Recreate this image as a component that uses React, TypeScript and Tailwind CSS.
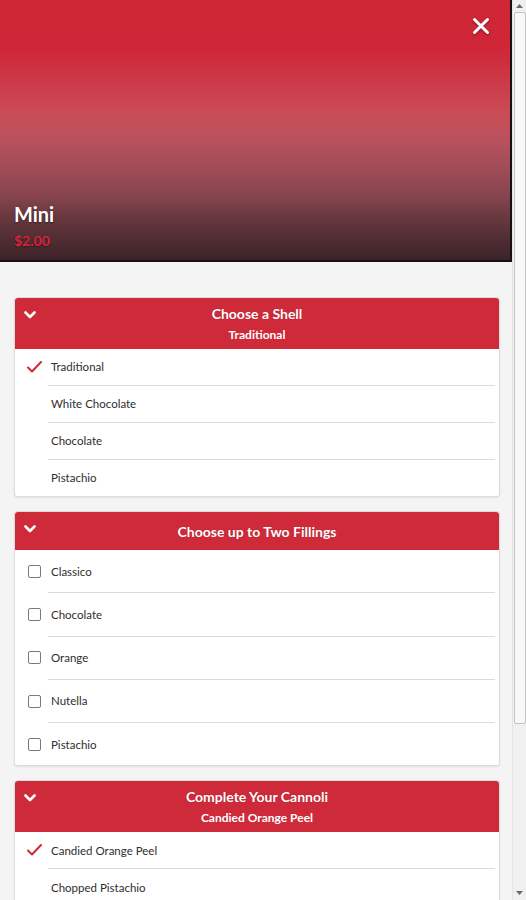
import React from 'react';

interface Section {
  title: string;
  subtitle?: string;
  kind: 'radio' | 'check';
  rowHeight: string;
  options: { label: string; selected?: boolean }[];
}

const sections: Section[] = [
  {
    title: 'Choose a Shell',
    subtitle: 'Traditional',
    kind: 'radio',
    rowHeight: 'h-[36px]',
    options: [
      { label: 'Traditional', selected: true },
      { label: 'White Chocolate' },
      { label: 'Chocolate' },
      { label: 'Pistachio' },
    ],
  },
  {
    title: 'Choose up to Two Fillings',
    kind: 'check',
    rowHeight: 'h-[42.3px]',
    options: [
      { label: 'Classico' },
      { label: 'Chocolate' },
      { label: 'Orange' },
      { label: 'Nutella' },
      { label: 'Pistachio' },
    ],
  },
  {
    title: 'Complete Your Cannoli',
    subtitle: 'Candied Orange Peel',
    kind: 'radio',
    rowHeight: 'h-[36px]',
    options: [
      { label: 'Candied Orange Peel', selected: true },
      { label: 'Chopped Pistachio' },
    ],
  },
];

function Chevron() {
  return (
    <svg width="12" height="8" viewBox="0 0 12 8" fill="none">
      <path d="M1.5 1.5 L6 6 L10.5 1.5" stroke="white" strokeWidth="2.6" strokeLinecap="round" strokeLinejoin="round" />
    </svg>
  );
}

function Check() {
  return (
    <svg width="15" height="12" viewBox="0 0 15 12" fill="none">
      <path d="M1 6.5 L5 10.5 L14 1" stroke="#cf2a39" strokeWidth="2" strokeLinecap="round" strokeLinejoin="round" />
    </svg>
  );
}

function OptionCard({ section }: { section: Section }) {
  return (
    <div className="shrink-0 bg-white border border-[#dcdcdc] rounded-[3px] shadow-[0_1px_2px_rgba(0,0,0,0.08)]">
      <div className={`relative bg-[#cf2a39] rounded-t-[3px] flex flex-col items-center justify-center text-white font-bold ${section.subtitle ? 'h-[51px]' : 'h-[38px]'}`}>
        <div className="absolute left-[9px] top-[13px]">
          <Chevron />
        </div>
        <div className="text-[14px] leading-[19px] [text-shadow:0_0_1px_rgba(0,0,0,0.25)]">{section.title}</div>
        {section.subtitle && (
          <div className="text-[12px] leading-[16px] mt-[4px]">{section.subtitle}</div>
        )}
      </div>
      <div>
        {section.options.map((opt, i) => (
          <div key={opt.label + i}>
            {i > 0 && <div className="ml-[33px] mr-[4px] border-t border-[#dadada]" />}
            <div className={`flex items-center ${section.rowHeight}`}>
              <div className="w-[36px] flex justify-center pl-[2px]">
                {section.kind === 'check' ? (
                  <div className="w-[13px] h-[13px] border-[1.5px] border-[#7a7a7a] rounded-[2px] bg-white" />
                ) : opt.selected ? (
                  <Check />
                ) : null}
              </div>
              <span className="text-[11.5px] text-[#2e2e2e]">{opt.label}</span>
            </div>
          </div>
        ))}
      </div>
    </div>
  );
}

function Scrollbar() {
  return (
    <div className="w-[14px] h-full bg-[#f0f0f0] border-l border-[#e4e4e4] flex flex-col items-center">
      <div className="h-[12px] flex items-center justify-center">
        <svg width="7" height="4" viewBox="0 0 7 4"><path d="M0 4 L3.5 0 L7 4 Z" fill="#6b6b6b" /></svg>
      </div>
      <div className="w-[12px] h-[712px] bg-[#f8f8f8] border border-[#c4c4c4] rounded-[2px]" />
      <div className="flex-1" />
      <div className="h-[14px] flex items-center justify-center">
        <svg width="7" height="4" viewBox="0 0 7 4"><path d="M0 0 L3.5 4 L7 0 Z" fill="#6b6b6b" /></svg>
      </div>
    </div>
  );
}

export default function App() {
  return (
    <div className="h-[900px] w-[526px] overflow-hidden flex bg-[#f4f4f4] font-['Lato','Liberation_Sans',sans-serif]">
      <div className="w-[512px] flex flex-col">
        <div className="relative shrink-0 h-[262px] border-b-2 border-r-2 border-[#151012] bg-[linear-gradient(to_bottom,#cf2636_0%,#cf2737_19%,#cd3545_29%,#cb4a55_42%,#b8525e_54%,#a24c57_64%,#8a4650_74%,#6b3940_83%,#502d33_92%,#3c2328_100%)] flex flex-col justify-end pl-[14px] pb-[10px]">
          <button className="absolute right-[20px] top-[17px] [filter:drop-shadow(0_1px_1px_rgba(0,0,0,0.4))]">
            <svg width="18" height="18" viewBox="0 0 18 18" fill="none">
              <path d="M2.5 2.5 L15.5 15.5 M15.5 2.5 L2.5 15.5" stroke="white" strokeWidth="3" strokeLinecap="round" />
            </svg>
          </button>
          <div className="text-white text-[20px] font-bold leading-[26px] [text-shadow:0_1px_2px_rgba(0,0,0,0.5)]">Mini</div>
          <div className="text-[#dc2239] text-[14px] font-bold leading-[18px] mt-[5px] [text-shadow:0_1px_1px_rgba(0,0,0,0.4)]">$2.00</div>
        </div>
        <div className="shrink-0 flex flex-col gap-[14px] pl-[14px] pr-[12px] pt-[35px]">
          {sections.map((s) => (
            <OptionCard key={s.title} section={s} />
          ))}
        </div>
      </div>
      <Scrollbar />
    </div>
  );
}
